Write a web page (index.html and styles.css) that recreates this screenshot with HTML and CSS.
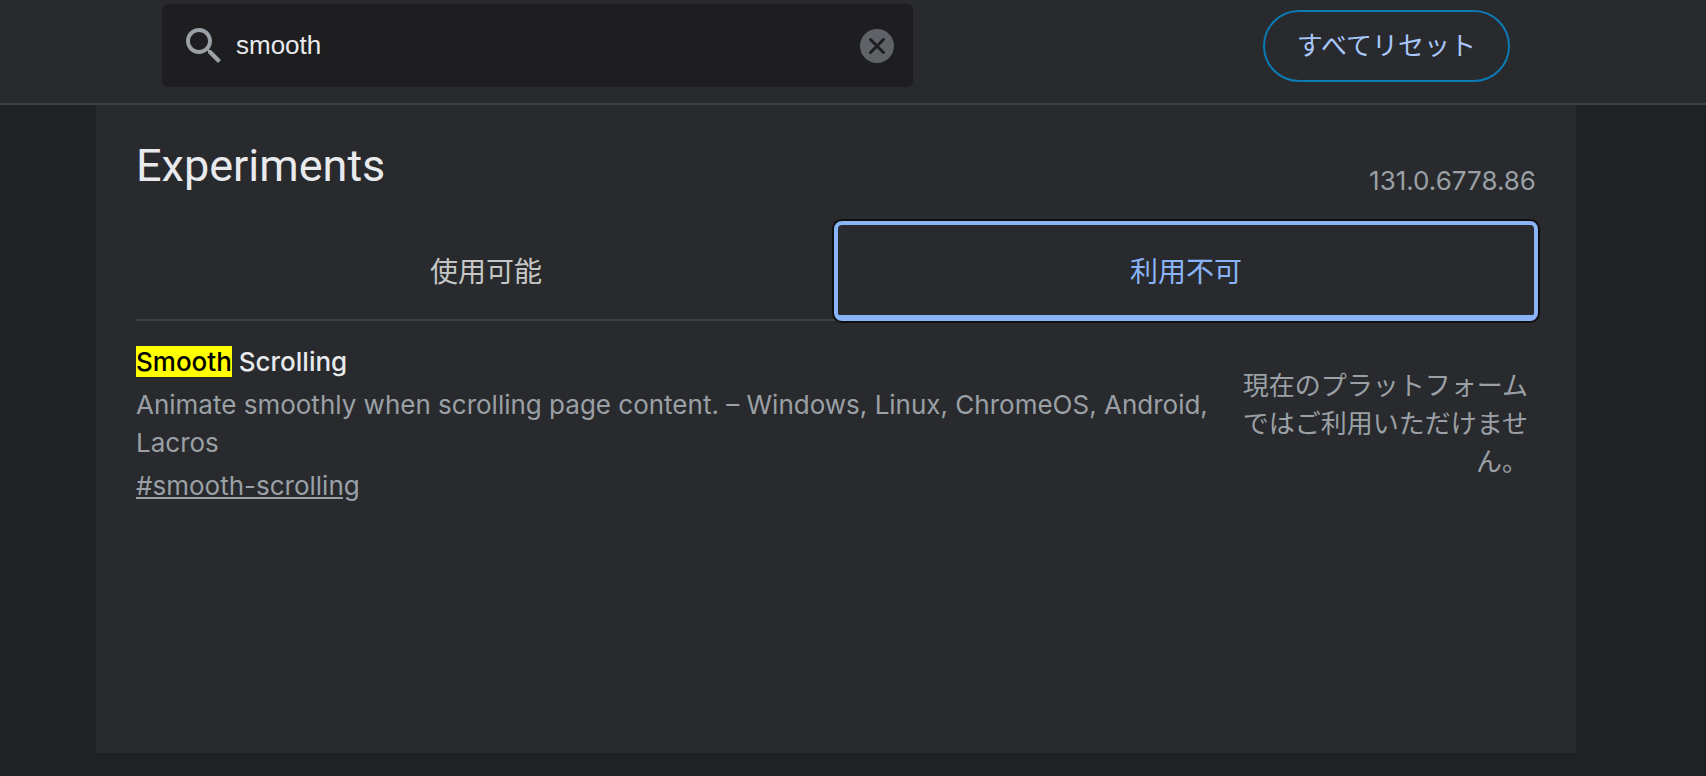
FILE: index.html
```
<!DOCTYPE html>
<html lang="ja">

<head>
	<meta charset="utf-8">
	<title>Experiments</title>
	<link rel="stylesheet" href="styles.css">
</head>

<body>
	<header class="toolbar">
		<div class="search">
			<svg class="search-icon" viewBox="0 0 24 24" aria-hidden="true">
				<path d="M15.5 14h-.79l-.28-.27C15.41 12.59 16 11.11 16 9.5 16 5.91 13.09 3 9.5 3S3 5.91 3 9.5 5.91 16 9.5 16c1.61 0 3.09-.59 4.23-1.57l.27.28v.79l5 4.99L20.49 19l-4.99-5zm-6 0C7.01 14 5 11.99 5 9.5S7.01 5 9.5 5 14 7.01 14 9.5 11.99 14 9.5 14z"/>
			</svg>
			<input class="search-input" type="text" value="smooth" aria-label="Search flags">
			<button class="clear-search" type="button" aria-label="Clear search">
				<svg viewBox="0 0 40 40">
					<circle cx="20" cy="20" r="17"/>
					<path d="M13.5 13.5l13 13M26.5 13.5l-13 13"/>
				</svg>
			</button>
		</div>
		<button class="reset-all" type="button">すべてリセット</button>
	</header>

	<main class="content">
		<div class="title-row">
			<h1 class="title">Experiments</h1>
			<span class="version">131.0.6778.86</span>
		</div>

		<div class="tabs" role="tablist">
			<button class="tab" type="button" role="tab" aria-selected="false">使用可能</button>
			<button class="tab selected" type="button" role="tab" aria-selected="true">利用不可</button>
		</div>

		<section class="experiment" id="smooth-scrolling">
			<div class="experiment-info">
				<h2 class="experiment-name"><mark>Smooth</mark> Scrolling</h2>
				<p class="description">Animate smoothly when scrolling page content. – Windows, Linux, ChromeOS, Android, Lacros</p>
				<a class="permalink" href="#smooth-scrolling">#smooth-scrolling</a>
			</div>
			<div class="unsupported">現在のプラットフォームではご利用いただけません。</div>
		</section>
	</main>
</body>

</html>
```
FILE: styles.css
```
* {
	box-sizing: border-box;
}

body {
	display: flex;
	flex-direction: column;
	min-height: 100vh;
	margin: 0;
	padding-bottom: 23px;
	background: #202124;
	color: #e8eaed;
	font-family: Inter, "Noto Sans CJK JP", sans-serif;
	font-size: 26px;
	line-height: 38px;
}

button,
input {
	border: none;
	background: none;
	font-family: inherit;
	font-size: inherit;
	cursor: pointer;
}

/* search bar and reset button */
.toolbar {
	display: flex;
	align-items: center;
	justify-content: space-between;
	padding: 4px 196px 16px 162px;
	border-bottom: 2px solid #3f4042;
	background: #292a2d;
}

.search {
	display: flex;
	align-items: center;
	width: 44vw;
	height: 83px;
	padding: 0 16px 0 18px;
	border-radius: 6px;
	background: #1e1e20;
}

.search-icon {
	flex: none;
	width: 48px;
	height: 48px;
	fill: #9aa0a6;
}

.search-input {
	flex: 1;
	min-width: 0;
	padding: 0 8px;
	outline: none;
	color: #e8eaed;
	font-family: "Liberation Sans", sans-serif;
	cursor: text;
}

.clear-search {
	width: 40px;
	height: 40px;
	padding: 0;
}

.clear-search circle {
	fill: #5f6368;
}

.clear-search path {
	stroke: #1e1e20;
	stroke-width: 3;
	stroke-linecap: round;
}

.reset-all {
	height: 72px;
	padding: 0 32px 4px;
	border: 2px solid #0b7bb5;
	border-radius: 36px;
	color: #a8c7fa;
}

/* main panel */
.content {
	flex: 1;
	margin: 0 130px 0 96px;
	padding: 32px 40px;
	background: #292a2d;
}

.title-row {
	display: flex;
	align-items: flex-end;
	justify-content: space-between;
	height: 86px;
	padding-bottom: 23px;
}

.title {
	margin: 0;
	font-family: Roboto, sans-serif;
	font-size: 45px;
	font-weight: 400;
	line-height: 68px;
}

.version {
	color: #9aa0a6;
}

.tabs {
	display: grid;
	grid-template-columns: 1fr 1fr;
	border-bottom: 2px solid #3f4042;
}

.tab {
	height: 96px;
	padding: 2px 0 0;
	border-bottom: 4px solid transparent;
	color: #c4c7c5;
	font-size: 28px;
}

.tab.selected {
	border-bottom-color: #8ab4f8;
	border-radius: 6px;
	outline: 4px solid #8ab4f8;
	outline-offset: -2px;
	box-shadow: 0 0 0 4px #101010;
	color: #8ab4f8;
}

/* one flag */
.experiment {
	display: flex;
	justify-content: space-between;
	padding-top: 22px;
}

.experiment-info {
	flex: 1;
}

.experiment-name {
	margin: 0 0 5px;
	font-size: 26px;
	font-weight: 500;
}

.experiment-name mark {
	background: #ff0;
	color: #000;
}

.description {
	margin: 0 0 5px;
	color: #9aa0a6;
}

.permalink {
	color: #9aa0a6;
}

.unsupported {
	width: 300px;
	padding: 24px 8px 0 0;
	color: #9aa0a6;
	text-align: right;
}
```
